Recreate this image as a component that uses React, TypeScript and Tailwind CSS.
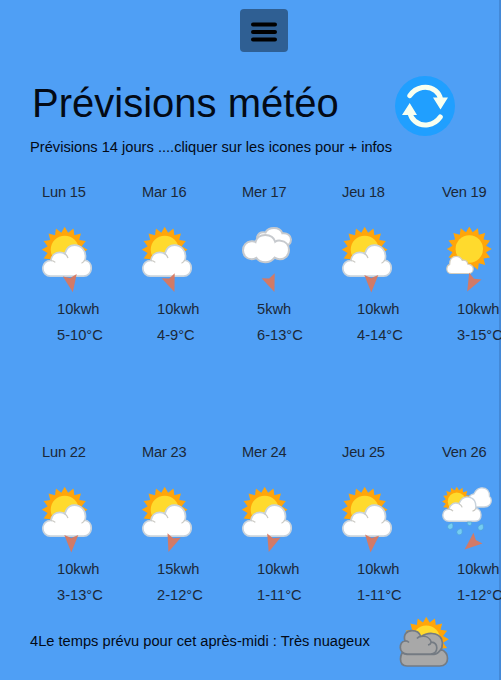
import React from 'react';

type Sky = 'suncloud' | 'clouds' | 'sunny' | 'rain';
type Day = { name: string; sky: Sky; wind: string; temp: string; angle: number };

const weeks: Day[][] = [
  [
    { name: 'Lun 15', sky: 'suncloud', wind: '10kwh', temp: '5-10°C', angle: -10 },
    { name: 'Mar 16', sky: 'suncloud', wind: '10kwh', temp: '4-9°C', angle: -21 },
    { name: 'Mer 17', sky: 'clouds', wind: '5kwh', temp: '6-13°C', angle: -21 },
    { name: 'Jeu 18', sky: 'suncloud', wind: '10kwh', temp: '4-14°C', angle: 0 },
    { name: 'Ven 19', sky: 'sunny', wind: '10kwh', temp: '3-15°C', angle: 28 },
  ],
  [
    { name: 'Lun 22', sky: 'suncloud', wind: '10kwh', temp: '3-13°C', angle: 0 },
    { name: 'Mar 23', sky: 'suncloud', wind: '15kwh', temp: '2-12°C', angle: 19 },
    { name: 'Mer 24', sky: 'suncloud', wind: '10kwh', temp: '1-11°C', angle: 17 },
    { name: 'Jeu 25', sky: 'suncloud', wind: '10kwh', temp: '1-11°C', angle: 5 },
    { name: 'Ven 26', sky: 'rain', wind: '10kwh', temp: '1-12°C', angle: 50 },
  ],
];

function Sun({ cx, cy, r }: { cx: number; cy: number; r: number }) {
  const n = 16;
  const points = Array.from({ length: n * 2 }, (_, i) => {
    const a = (Math.PI * i) / n - Math.PI / 2;
    const d = i % 2 ? r * 0.76 : r;
    return `${(cx + d * Math.cos(a)).toFixed(2)},${(cy + d * Math.sin(a)).toFixed(2)}`;
  }).join(' ');
  return (
    <>
      <polygon points={points} fill="#ffa50a" />
      <circle cx={cx} cy={cy} r={r * 0.61} fill="#ffda2d" />
    </>
  );
}

function SunCloud() {
  return (
    <>
      <Sun cx={22.7} cy={22.7} r={22.9} />
      <path
        d="M8.5 49.2C4 49.2.8 45.8.8 41.3C.8 36.6 4.3 33.3 8.9 33.5C9.7 28.3 13.5 25.3 17.8 25.3C19.6 25.3 21.3 25.8 22.8 26.7C24.3 21.3 27.8 18.1 32.5 18.1C39 18.1 43.8 23.3 43.5 30C43.4 31.3 43.2 32.3 42.8 33.1C46.7 33.5 49.2 36.9 49.2 41.2C49.2 45.8 46 49.2 41.5 49.2Z"
        fill="#fff"
        stroke="#c9d3dc"
        strokeWidth="1.7"
      />
      <path
        d="M8.5 33.5C10.3 33.5 12.1 34.1 13.3 35.4M22.5 26.5C24.2 27.6 25.5 29.2 26 31.2M42.8 33C42.1 34.6 40.9 35.6 39.5 36.2"
        fill="none"
        stroke="#c9c8c2"
        strokeWidth="1.2"
      />
    </>
  );
}

function Clouds() {
  return (
    <g fill="#fff" stroke="#c7cace" strokeWidth="2">
      <path d="M15 10C16.500 6 19.500 4.500 23.500 5.500C25 2.500 28.500 1 32 1C36 1 39.200 3.200 40.400 6.300C45.400 5.700 49 8.600 49 12.500C49 16.500 46 19.500 42 19.500H25Z" />
      <path d="M9 14.300C11 14 12.500 14.300 13.500 15C14.600 10.700 18.500 8 23.200 8C28 8 32 10.700 33.200 14.800C34.700 13.700 36.700 13.300 38.700 13.700C43.500 14.300 47 17.900 47 23C47 28.600 43 32.200 37.800 32.200C35.900 32.200 34.100 31.600 32.600 30.600C30 34.200 26.800 35.200 23.200 35.200C19.300 35.200 16 33.500 14.300 30.800C12.800 31.800 11.200 32.200 9.500 32.200C4.500 32.200 1 28.400 1 23.300C1 18.500 4.300 14.800 9 14.300Z" />
    </g>
  );
}

function Sunny() {
  return (
    <>
      <Sun cx={27.3} cy={22} r={22.5} />
      <path
        d="M9.500 46.500C6.700 46.500 4.800 44.600 4.800 42C4.800 39.800 5.900 38.100 7.700 37.400C7.300 32.700 10 29.300 14 29.300C16.900 29.300 19.200 30.800 20.200 33.300C23.200 32.600 25.400 34.200 25.800 37.100C29 37.500 31.200 39.300 31.200 42C31.200 44.800 29 46.500 26.500 46.500Z"
        fill="#fff"
        stroke="#d4cdbd"
        strokeWidth="1.2"
      />
    </>
  );
}

function Rain() {
  return (
    <>
      <Sun cx={14.8} cy={14.5} r={14.8} />
      <path
        d="M26 18C24.500 12.500 27.500 7.500 32 6.800C34 2.500 37 .8 40 .8C44.500 .8 48 4 47.500 9.500C49.800 11 50 15.700 47.500 18C46 19.800 44 20 42 20L29 20Z"
        fill="#fff"
        stroke="#c9d3dc"
        strokeWidth="1.3"
      />
      <path
        d="M7 34.300C3 34.300.8 31.500.8 28.300C.8 24.500 3.500 22.100 7 22.200C8 17.300 12.500 14.700 17 16.700C19 11.700 22.500 9.300 26.500 10.100C32 10.600 34.500 15.200 33.700 21.500C37.200 21.500 39 24.800 39 28C39 32 36.500 34.300 33 34.300Z"
        fill="#fff"
        stroke="#c9d3dc"
        strokeWidth="1.4"
      />
      <path d="M6.700 22.200Q9.500 22.300 11 24.200M17 16.700Q19.500 18 20.200 20.300M33.700 21.500Q33 23.500 30.500 24.200" fill="none" stroke="#c9c8c2" strokeWidth="1.2" />
      <g fill="#74cdf3" stroke="#4fa5d4" strokeWidth=".7">
        {[[8.3, 36], [17.5, 41.5], [38.7, 37]].map(([x, y]) => (
          <path key={x} d={`M${x + 2} ${y}C${x - 1} ${y + 0.7} ${x - 3.2} ${y + 2.2} ${x - 2.6} ${y + 4.5}C${x - 1.8} ${y + 7} ${x + 1.8} ${y + 6.8} ${x + 2.6} ${y + 4.3}C${x + 2.9} ${y + 3} ${x + 2.6} ${y + 1.3} ${x + 2} ${y}Z`} />
        ))}
        <path d="M25.200 35H29.600C30.500 39.500 25 40 25.200 35Z" />
      </g>
    </>
  );
}

const skies: Record<Sky, () => React.JSX.Element> = { suncloud: SunCloud, clouds: Clouds, sunny: Sunny, rain: Rain };

function DayCell({ day }: { day: Day }) {
  const Icon = skies[day.sky];
  return (
    <div className="w-[100px] shrink-0 whitespace-nowrap text-[#1b2838]">
      <div className="h-[43px] leading-4 tracking-[-0.2px]">{day.name}</div>
      <svg className="block h-[70px] w-[50px]" viewBox="0 0 50 70">
        <Icon />
        <path
          d="M0 8.700L-7 -8.700L0 -5.800L7 -8.700Z"
          transform={`translate(29.300 56.800) rotate(${day.angle})`}
          fill="#d9785f"
          fillOpacity=".95"
        />
      </svg>
      <div className="pl-[15px] leading-[26px]">
        <div className="-mt-px">{day.wind}</div>
        <div>{day.temp}</div>
      </div>
    </div>
  );
}

export default function App() {
  return (
    <main className="flex h-[680px] w-[501px] flex-col overflow-hidden bg-[linear-gradient(to_right,#4f9ff5_499px,#4389d8_499px)] pt-[9px] font-['Liberation_Sans',Arial,sans-serif] text-[14.67px] text-[#030a16]">
      <button className="ml-[240px] flex h-[43px] w-12 shrink-0 items-center justify-center rounded-[4px] bg-[#2f5f93]">
        <svg className="mt-[3px] block" width="26" height="20" viewBox="0 0 26 20">
          <path d="M2 2.500H24M2 10H24M2 17.500H24" stroke="#000" strokeWidth="4" strokeLinecap="round" />
        </svg>
      </button>
      <header className="mt-6 flex h-[60px] shrink-0 pl-8">
        <h1 className="w-[363px] whitespace-nowrap text-[40px] leading-[55px]">Prévisions météo</h1>
        <svg width="60" height="60" viewBox="0 0 60 60">
          <circle cx="30" cy="30" r="30" fill="#209fff" />
          <g fill="none" stroke="#f8fff0" strokeWidth="5" strokeLinecap="round">
            <path d="M14.800 19.700C21 10.500 33 8.700 40.500 14.800Q44.500 18 45.500 23" />
            <path d="M45.300 41C39 49.800 27.500 51.500 20 45.300Q16 42 15 37" />
          </g>
          <path d="M38 21.500L53 21.500L45.500 33.500ZM7 39L22 39L14.700 27Z" fill="#f8fff0" />
        </svg>
      </header>
      <p className="mt-[3px] h-[45px] shrink-0 whitespace-nowrap pl-[30px] leading-4">Prévisions 14 jours ....cliquer sur les icones pour + infos</p>
      {weeks.map((week) => (
        <section key={week[0].name} className="flex h-[260px] shrink-0 pl-[42px] last-of-type:h-[173px]">
          {week.map((day) => (
            <DayCell key={day.name} day={day} />
          ))}
        </section>
      ))}
      <footer className="flex shrink-0 pl-[30px]">
        <p className="w-[369px] whitespace-nowrap pt-4 leading-4">4Le temps prévu pour cet après-midi : Très nuageux</p>
        <svg width="50" height="50" viewBox="0 0 50 50">
          <Sun cx={27.3} cy={22.3} r={22.5} />
          <g fill="#a8a8a8" stroke="#747b83" strokeWidth="1.7" strokeLinejoin="round">
            <path d="M22 20C28 15 39 15 42.500 22C45 28 42.500 34 38 37L25 36Z" />
            <path d="M8 37.500H35C38 37 40.500 34.500 42 32.500C46 34 48.500 37 48.500 41.500C48.500 46 45.500 49 41 49H8C3.500 49 1.500 46 1.500 42C1.500 39.500 2 38 3 36Z" />
            <path d="M8.500 37C4 37 1.300 34 1.300 30.500C1.300 27 3.200 24.500 6 24C4 18 7.500 13.600 13 13.600C17.500 13.600 20.500 15.500 21.800 19.500C27 18.500 31 21 32.300 25.200C36 25.500 37.800 28 37.800 31C37.800 34.800 35 37 31.500 37Z" />
            <path d="M6 24Q8 23.500 10 25.500M21.800 19.500Q19.500 19.500 18 21.500M32.300 25.200Q31.500 27.500 29 28" fill="none" />
          </g>
        </svg>
      </footer>
    </main>
  );
}
